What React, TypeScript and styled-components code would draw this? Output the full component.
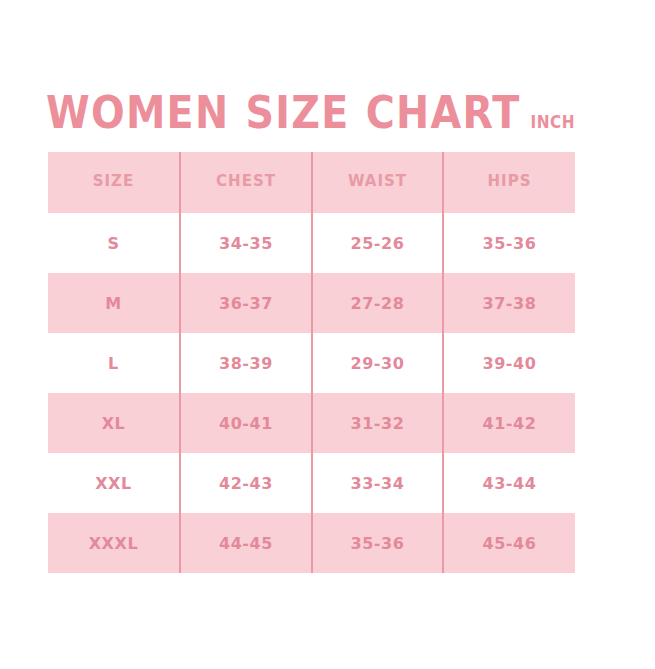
import React from "react";
import styled, { createGlobalStyle } from "styled-components";

const Global = createGlobalStyle`
  html, body { margin: 0; padding: 0; background: #ffffff; }
  body { font-family: "DejaVu Sans", "Liberation Sans", sans-serif; }
`;

const Page = styled.div`
  width: 655px;
  height: 669px;
  background: #ffffff;
  padding-top: 88px;
  box-sizing: border-box;
`;

const TitleRow = styled.div`
  display: flex;
  align-items: baseline;
  padding-left: 46px;
  height: 50px;
  margin-bottom: 14px;
`;

const Title = styled.h1`
  margin: 0;
  font-family: "DejaVu Sans Condensed", "DejaVu Sans", sans-serif;
  font-stretch: condensed;
  font-weight: 700;
  font-size: 44px;
  line-height: 50px;
  color: #ec8f9b;
  letter-spacing: 1.3px;
  word-spacing: 1px;
`;

const Unit = styled.span`
  font-family: "DejaVu Sans Condensed", "DejaVu Sans", sans-serif;
  font-weight: 700;
  font-size: 17px;
  color: #ec8f9b;
  margin-left: 10px;
  letter-spacing: 0.5px;
`;

const Table = styled.div`
  margin-left: 48px;
  width: 527px;
  display: flex;
  flex-direction: column;
`;

const Row = styled.div<{ $pink: boolean; $h: number }>`
  display: grid;
  grid-template-columns: 133px 132px 131px 131px;
  height: ${(p) => p.$h}px;
  background: ${(p) => (p.$pink ? "#f9d0d6" : "#ffffff")};
`;

const Cell = styled.div<{ $head?: boolean; $divider: boolean }>`
  display: flex;
  align-items: center;
  justify-content: center;
  border-right: ${(p) => (p.$divider ? "2px solid #e99aa5" : "none")};
  font-weight: 700;
  font-size: ${(p) => (p.$head ? "15px" : "16px")};
  letter-spacing: ${(p) => (p.$head ? "1px" : "0.6px")};
  color: ${(p) => (p.$head ? "#e89aa5" : "#e4899a")};
  padding-bottom: ${(p) => (p.$head ? "3px" : "0")};
`;

const head = ["SIZE", "CHEST", "WAIST", "HIPS"];
const rows = [
  ["S", "34-35", "25-26", "35-36"],
  ["M", "36-37", "27-28", "37-38"],
  ["L", "38-39", "29-30", "39-40"],
  ["XL", "40-41", "31-32", "41-42"],
  ["XXL", "42-43", "33-34", "43-44"],
  ["XXXL", "44-45", "35-36", "45-46"],
];

export default function App() {
  return (
    <Page>
      <Global />
      <TitleRow>
        <Title>WOMEN SIZE CHART</Title>
        <Unit>INCH</Unit>
      </TitleRow>
      <Table>
        <Row $pink $h={61}>
          {head.map((h, i) => (
            <Cell key={h} $head $divider={i < 3}>
              {h}
            </Cell>
          ))}
        </Row>
        {rows.map((r, ri) => (
          <Row key={r[0]} $pink={ri % 2 === 1} $h={60}>
            {r.map((c, i) => (
              <Cell key={i} $divider={i < 3}>
                {c}
              </Cell>
            ))}
          </Row>
        ))}
      </Table>
    </Page>
  );
}
